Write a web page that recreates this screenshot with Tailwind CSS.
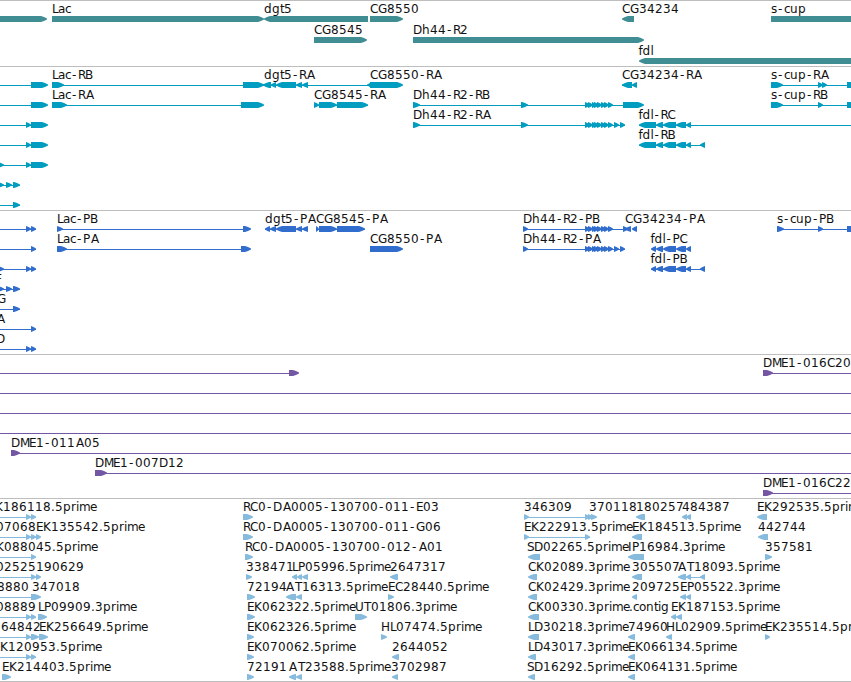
<!DOCTYPE html>
<html lang="en">
<head>
  <meta charset="UTF-8" />
  <meta name="viewport" content="width=device-width, initial-scale=1.0"/>
  <title>Genome Browser</title>
  <script src="https://cdn.jsdelivr.net/npm/@tailwindcss/browser@4"></script>
</head>
<body class="bg-white text-black overflow-hidden">
  <main class="flex flex-col w-[851px] h-[682px] overflow-hidden border-b border-[#bebebe]">
    <section id="genes" class="shrink-0 h-[66px] border-t border-[#bebebe] pt-[2px] text-[#408e94]"></section>
    <section id="transcripts" class="shrink-0 h-36 border-t border-[#bebebe] pt-[2px] text-[#009dc0]"></section>
    <section id="proteins" class="shrink-0 h-36 border-t border-[#bebebe] pt-[2px] text-[#306dcd]"></section>
    <section id="bacs" class="shrink-0 h-36 border-t border-[#bebebe] pt-[2px] text-[#7357a5]"></section>
    <section id="ests" class="shrink-0 h-[183px] border-t border-[#bebebe] pt-[2px] text-[#87bbdd]"></section>
  </main>

  <script>
    // one row: [intron lines, exons, labels]
    // exons: a>b forward, a<b reverse, a=b plain box
    const tiny = "585>590 588>593 592>597 594>599 597>602 601>606 604>609 608>613";
    const fdl = "656<663 663<676 676<686 686<691";
    const tracks = {
      genes: [
        ["", "-20>47 52>264 264<368 370>403 622<634 771=870", { 52: "Lac", 264: "dgt5", 370: "CG8550", 622: "CG34234", 771: "s-cup" }],
        ["", "314>367 413>644", { 314: "CG8545", 413: "Dh44-R2" }],
        ["", "639<870", { 638.5: "fdl" }]
      ],
      transcripts: [
        ["-5:31 52:243 263:370 622:637 771:851", "31>48 52>64 243>264 263<271 271<276 276<296 296<302 302<308 367<374 370>403 622<632 632<637 771>783 818>823 822>827 847=870",
          { 52: "Lac-RB", 264: "dgt5-RA", 370: "CG8550-RA", 622: "CG34234-RA", 771: "s-cup-RA" }],
        ["-5:31 52:243 314:368 413:623 771:851", "31>48 52>67 241>264 314>319 319>337 337>368 413>420 521>528 " + tiny + " 623>644 771>783 818>823 847=870",
          { 52: "Lac-RA", 314: "CG8545-RA", 413: "Dh44-R2-RB", 771: "s-cup-RB" }],
        ["-5:31 413:625 639:851", "26>31 31>48 413>420 521>528 " + tiny + " 614>619 620>625 639<656 " + fdl, { 413: "Dh44-R2-RA", 638.5: "fdl-RC" }],
        ["-5:31 639:705", "26>31 31>48 639<656 " + fdl + " 700<705", { 638.5: "fdl-RB" }],
        ["-5:31", "-2>4 26>31 31>48", {}],
        ["-5:20", "-2>4 6>12 13>20", {}],
        ["-5:20", "13>20", {}]
      ],
      proteins: [
        ["-5:36 57:243 265:308 316:365 523:628 777:851", "26>31 31>36 57>63 243>251 265<270 270<276 276<296 296<302 302<308 316>319 319>337 337>365 523>528 " + tiny + " 623>628 625<631 632<637 777>784 818>823 847=870",
          { 57: "Lac-PB", 265: "dgt5-PA", 316: "CG8545-PA", 523: "Dh44-R2-PB", 625: "CG34234-PA", 777: "s-cup-PB" }],
        ["-5:36 57:243 523:625", "31>36 57>67 241>251 370>403 523>528 " + tiny + " 614>619 620>625 651<656 " + fdl,
          { 57: "Lac-PA", 370: "CG8550-PA", 523: "Dh44-R2-PA", 650.5: "fdl-PC" }],
        ["-5:36 651:705", "-2>4 26>31 31>36 651<656 " + fdl + " 700<705", { 650.5: "fdl-PB" }],
        ["-5:20", "-2>4 6>12 13>20", { "-5": "F" }],
        ["-5:20", "13>20", { "-3": "G" }],
        ["-5:36", "31>36", { "-3": "A" }],
        ["-5:36", "26>31 31>36", { "-4": "D" }]
      ],
      bacs: [
        ["-5:289 763:851", "289>299 763>773", { 763: "DME1-016C20" }],
        ["-5:851", "", {}],
        ["-5:851", "", {}],
        ["-5:851", "", {}],
        ["11:851", "11>20", { 11: "DME1-011A05" }],
        ["95:851", "95>107", { 95: "DME1-007D12" }],
        ["763:851", "763>773", { 763: "DME1-016C22" }]
      ],
      ests: [
        ["-5:36 524:590", "26>31 31>36 243>253 524>529 585>590 588>593 591>597 636<645 682<687 686<691 757<767",
          { "-12": "EK186118.5prime", 243: "RC0-DA0005-130700-011-E03", 524: "346309", 589: "370118", 636: "180257", 682: "484387", 757: "EK292535.5prime" }],
        ["-5:36 524:590", "26>31 31>36 36>41 243>253 524>529 585>590 632<642 758<768",
          { "-4": "07068", 36: "EK135542.5prime", 243: "RC0-DA0005-130700-011-G06", 524: "EK222913.5prime", 632: "EK184513.5prime", 758: "442744" }],
        ["-5:36", "31>36 245>253 528<540 628<644 765>772",
          { "-11": "EK088045.5prime", 245: "RC0-DA0005-130700-012-A01", 527: "SD02265.5prime", 628: "IP16984.3prime", 765: "357581" }],
        ["-5:36 686:705", "31>36 36>41 246>252 292<297 297<302 302<308 390<398 528<537 632<642 678<686 686<691 700<705",
          { "-4": "02525", 36: "190629", 246: "338471", 292: "LP05996.5prime", 390: "2647317", 528: "CK02089.3prime", 632: "305507", 678: "AT18093.5prime" }],
        ["-5:36", "31>41 247>255 286<296 296<302 388>394 528<537 632<637 680<686 686<691",
          { "-3": "8880", 32: "347018", 247: "72194", 286: "AT16313.5prime", 388: "EC28440.5prime", 528: "CK02429.3prime", 632: "209725", 680: "EP05522.3prime" }],
        ["-5:36", "26>31 31>36 38>47 247>255 355>367 528<539 671<676 676<682",
          { "-4": "08889", 38: "LP09909.3prime", 247: "EK062322.5prime", 355: "UT01806.3prime", 528: "CK00330.3prime", 629: ".contig", 671: "EK187153.5prime" }],
        ["-5:36", "26>31 31>39 39>48 247>254 381>387 528<539 628<635 666<672 765>770",
          { 1: "64842", 39: "EK256649.5prime", 247: "EK062326.5prime", 381: "HL07474.5prime", 528: "LD30218.3prime", 628: "74960", 666: "HL02909.5prime", 765: "EK235514.5prime" }],
        ["-5:36", "26>31 31>36 247>254 392<399 528<536 628<635",
          { "-7": "EK120953.5prime", 247: "EK070062.5prime", 392: "2644052", 528: "LD43017.3prime", 628: "EK066134.5prime" }],
        ["", "2>11 247>254 289<296 296<302 392<398 528<535 628<635",
          { 2: "EK214403.5prime", 247: "72191", 289: "AT23588.5prime", 391: "3702987", 527: "SD16292.5prime", 628: "EK064131.5prime" }]
      ]
    };

    // whole pixel advance of each character, 8 when not listed
    const advance = { A: 9, B: 7, D: 9, E: 7, F: 7, G: 9, H: 9, I: 4, L: 6, M: 9, P: 7, R: 7, S: 7, T: 7, U: 9,
      a: 7, c: 6, e: 7, f: 4, i: 3, l: 3, m: 11, o: 7, r: 5, s: 6, t: 4, "-": 7, ".": 4 };

    function exon(str) {
      const [, a, dir, b] = str.match(/(-?\d+)([<>=])(\d+)/);
      const x1 = +a, x2 = +b;
      const head = dir === "=" ? 0 : Math.min(6, x2 - x1);
      const half = head / 2;
      if (dir === "<") return `<path d="M${x2} 13H${x1 + head}L${x1 + half} 14L${x1} 15.5v1L${x1 + half} 18L${x1 + head} 19H${x2}z"/>`;
      return `<path d="M${x1} 13H${x2 - head}L${x2 - half} 14L${x2} 15.5v1L${x2 - half} 18L${x2 - head} 19H${x1}z"/>`;
    }

    function label(x, str) {
      let pos = +x;
      const xs = [...str].map((c, i) => {
        const p = c === "-" || (c === "A" && i > 0) ? pos + 1 : pos;
        pos += advance[c] || 8;
        return p;
      });
      return `<text x="${xs.join(" ")}" y="10">${str}</text>`;
    }

    Object.keys(tracks).forEach(id => {
      const height = id === "genes" ? 21 : 20;
      document.getElementById(id).innerHTML = tracks[id].map(([lines, exons, labels]) => `
        <svg class="block overflow-visible" width="851" height="${height}" fill="currentColor">
          ${lines.split(" ").filter(Boolean).map(l => {
            const [a, b] = l.split(":");
            return `<rect x="${a}" y="16" width="${b - a}" height="1"/>`;
          }).join("")}
          ${exons.split(" ").filter(Boolean).map(exon).join("")}
          <g class="fill-[#111111] text-[12px] font-['DejaVu_Sans',sans-serif]">
            ${Object.entries(labels).map(([x, str]) => label(x, str)).join("")}
          </g>
        </svg>
      `).join("");
    });
  </script>
</body>
</html>
